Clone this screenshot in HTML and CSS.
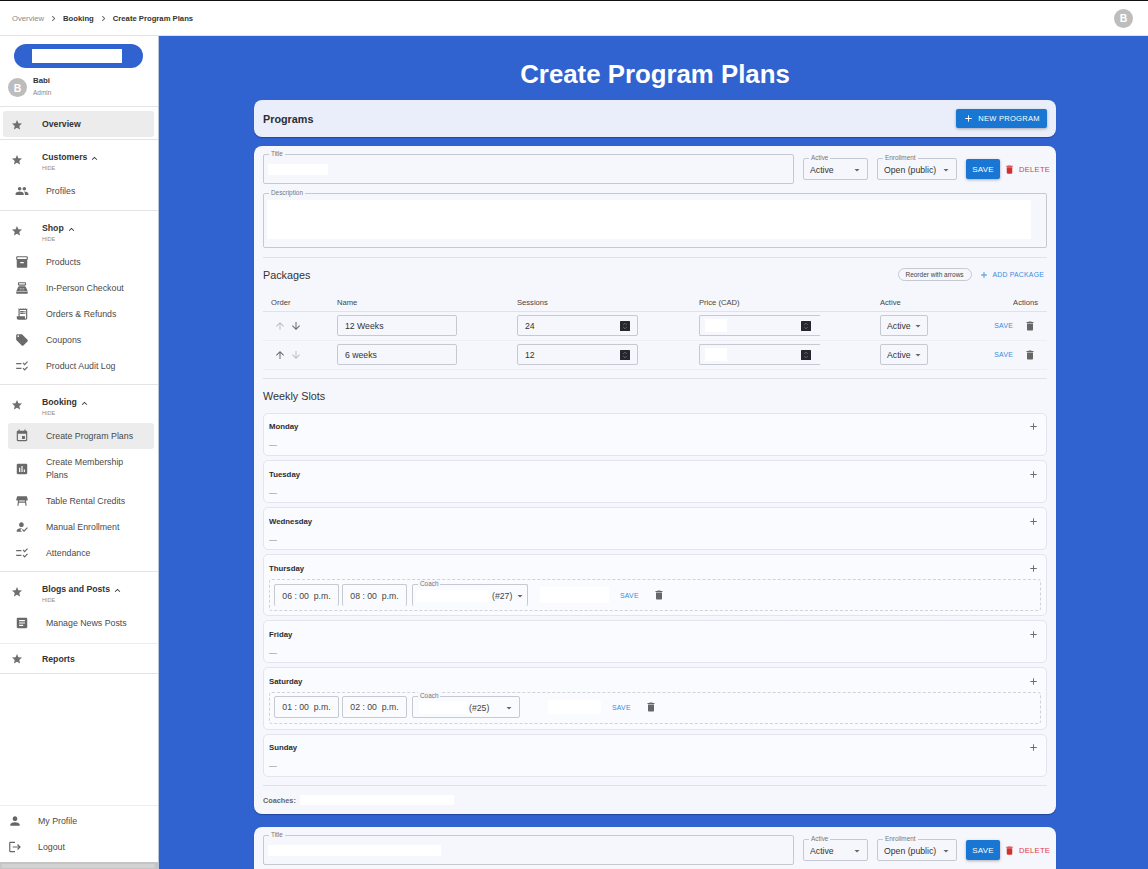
FILE: index.html
```html
<!DOCTYPE html>
<html lang="en">
<head>
<meta charset="utf-8">
<title>Create Program Plans</title>
<link rel="stylesheet" href="styles.css">
</head>
<body>
<svg class="sprite" aria-hidden="true">
<symbol id="i-star" viewBox="0 0 24 24"><path d="M12 17.27 18.18 21l-1.64-7.03L22 9.24l-7.19-.61L12 2 9.19 8.63 2 9.24l5.46 4.73L5.82 21z"/></symbol>
<symbol id="i-people" viewBox="0 0 24 24"><path d="M16 11c1.66 0 2.99-1.34 2.99-3S17.66 5 16 5c-1.66 0-3 1.34-3 3s1.34 3 3 3zm-8 0c1.66 0 2.99-1.34 2.99-3S9.66 5 8 5C6.34 5 5 6.34 5 8s1.34 3 3 3zm0 2c-2.33 0-7 1.17-7 3.5V19h14v-2.5c0-2.33-4.67-3.5-7-3.5zm8 0c-.29 0-.62.02-.97.05 1.16.84 1.97 1.97 1.97 3.45V19h6v-2.5c0-2.33-4.67-3.5-7-3.5z"/></symbol>
<symbol id="i-less" viewBox="0 0 24 24"><path d="M12 8l-6 6 1.41 1.41L12 10.83l4.59 4.58L18 14z"/></symbol>
<symbol id="i-box" viewBox="0 0 24 24"><path d="M20 2H4c-1 0-2 .9-2 2v3.01c0 .72.43 1.34 1 1.69V20c0 1.1 1.1 2 2 2h14c.9 0 2-.9 2-2V8.7c.57-.35 1-.97 1-1.69V4c0-1.1-1-2-2-2zm-5 12H9v-2h6v2zm5-7H4V4l16-.02V7z"/></symbol>
<symbol id="i-pos" viewBox="0 0 24 24"><path d="M17 2H7c-1.1 0-2 .9-2 2v2c0 1.1.9 2 2 2h10c1.1 0 2-.9 2-2V4c0-1.1-.9-2-2-2zm0 4H7V4h10v2zm3 16H4c-1.1 0-2-.9-2-2v-1h20v1c0 1.1-.9 2-2 2zm-1.47-11.81C18.21 9.47 17.49 9 16.7 9H7.3c-.79 0-1.51.47-1.83 1.19L2 18h20l-3.47-7.81zM9.5 16h-1c-.28 0-.5-.22-.5-.5s.22-.5.5-.5h1c.28 0 .5.22.5.5s-.22.5-.5.5zm0-3h-1c-.28 0-.5-.22-.5-.5s.22-.5.5-.5h1c.28 0 .5.22.5.5s-.22.5-.5.5zm3 3h-1c-.28 0-.5-.22-.5-.5s.22-.5.5-.5h1c.28 0 .5.22.5.5s-.22.5-.5.5zm0-3h-1c-.28 0-.5-.22-.5-.5s.22-.5.5-.5h1c.28 0 .5.22.5.5s-.22.5-.5.5zm3 3h-1c-.28 0-.5-.22-.5-.5s.22-.5.5-.5h1c.28 0 .5.22.5.5s-.22.5-.5.5zm0-3h-1c-.28 0-.5-.22-.5-.5s.22-.5.5-.5h1c.28 0 .5.22.5.5s-.22.5-.5.5z"/></symbol>
<symbol id="i-receipt" viewBox="0 0 24 24"><path d="M19.5 3.5 18 2l-1.5 1.5L15 2l-1.5 1.5L12 2l-1.5 1.5L9 2 7.5 3.5 6 2v14H3v3c0 1.66 1.34 3 3 3h12c1.66 0 3-1.34 3-3V2l-1.5 1.5zM19 19c0 .55-.45 1-1 1s-1-.45-1-1v-3H8V5h11v14z"/><path d="M9 7h6v2H9zm7 0h2v2h-2zM9 10h6v2H9zm7 0h2v2h-2z"/></symbol>
<symbol id="i-tag" viewBox="0 0 24 24"><path d="M21.41 11.58l-9-9C12.05 2.22 11.55 2 11 2H4c-1.1 0-2 .9-2 2v7c0 .55.22 1.05.59 1.42l9 9c.36.36.86.58 1.41.58.55 0 1.05-.22 1.41-.59l7-7c.37-.36.59-.86.59-1.41 0-.55-.23-1.06-.59-1.42zM5.5 7C4.67 7 4 6.33 4 5.5S4.67 4 5.5 4 7 4.67 7 5.5 6.33 7 5.5 7z"/></symbol>
<symbol id="i-checks" viewBox="0 0 24 24"><path d="M16.54 11 13 7.46l1.41-1.41 2.12 2.12 4.24-4.24 1.41 1.41L16.54 11zM11 7H2v2h9V7zM16.54 20 13 16.46l1.41-1.41 2.12 2.12 4.24-4.24 1.41 1.41L16.54 20zM11 15H2v2h9v-2z"/></symbol>
<symbol id="i-event" viewBox="0 0 24 24"><path d="M17 12h-5v5h5v-5zM16 1v2H8V1H6v2H5c-1.11 0-1.99.9-1.99 2L3 19c0 1.1.89 2 2 2h14c1.1 0 2-.9 2-2V5c0-1.1-.9-2-2-2h-1V1h-2zm3 18H5V8h14v11z"/></symbol>
<symbol id="i-chart" viewBox="0 0 24 24"><path d="M19 3H5c-1.1 0-2 .9-2 2v14c0 1.1.9 2 2 2h14c1.1 0 2-.9 2-2V5c0-1.1-.9-2-2-2zM9 17H7v-7h2v7zm4 0h-2V7h2v10zm4 0h-2v-4h2v4z"/></symbol>
<symbol id="i-table" viewBox="0 0 24 24"><path d="M21.96 9.73l-1.43-5C20.41 4.3 20.02 4 19.57 4H4.43c-.45 0-.84.3-.96.73l-1.43 5C1.86 10.36 2.34 11 3 11h2.2L4 20h2l.67-5h10.67l.66 5h2l-1.2-9H21c.66 0 1.14-.64.96-1.27zM6.93 13l.27-2h9.6l.27 2H6.93z"/></symbol>
<symbol id="i-enroll" viewBox="0 0 24 24"><path d="M9 17l3-2.94c-.39-.04-.68-.06-1-.06-2.67 0-8 1.34-8 4v2h9l-3-3zm2-5c2.21 0 4-1.79 4-4s-1.79-4-4-4-4 1.79-4 4 1.79 4 4 4m4.47 8.5L12 17l1.4-1.41 2.07 2.08 5.13-5.17 1.4 1.41z"/></symbol>
<symbol id="i-article" viewBox="0 0 24 24"><path d="M19 3H5c-1.1 0-2 .9-2 2v14c0 1.1.9 2 2 2h14c1.1 0 2-.9 2-2V5c0-1.1-.9-2-2-2zm-5 14H7v-2h7v2zm3-4H7v-2h10v2zm0-4H7V7h10v2z"/></symbol>
<symbol id="i-person" viewBox="0 0 24 24"><path d="M12 12c2.21 0 4-1.79 4-4s-1.79-4-4-4-4 1.79-4 4 1.79 4 4 4zm0 2c-2.67 0-8 1.34-8 4v2h16v-2c0-2.66-5.33-4-8-4z"/></symbol>
<symbol id="i-logout" viewBox="0 0 24 24"><path d="M17 7l-1.41 1.41L18.17 11H8v2h10.17l-2.58 2.58L17 17l5-5zM4 5h8V3H4c-1.1 0-2 .9-2 2v14c0 1.1.9 2 2 2h8v-2H4V5z"/></symbol>
<symbol id="i-delete" viewBox="0 0 24 24"><path d="M6 19c0 1.1.9 2 2 2h8c1.1 0 2-.9 2-2V7H6v12zM19 4h-3.5l-1-1h-5l-1 1H5v2h14V4z"/></symbol>
<symbol id="i-add" viewBox="0 0 24 24"><path d="M19 13h-6v6h-2v-6H5v-2h6V5h2v6h6v2z"/></symbol>
<symbol id="i-up" viewBox="0 0 24 24"><path d="M4 12l1.41 1.41L11 7.83V20h2V7.83l5.58 5.59L20 12l-8-8-8 8z"/></symbol>
<symbol id="i-down" viewBox="0 0 24 24"><path d="M20 12l-1.41-1.41L13 16.17V4h-2v12.17l-5.58-5.59L4 12l8 8 8-8z"/></symbol>
<symbol id="i-next" viewBox="0 0 24 24"><path d="M10 6 8.59 7.41 13.17 12l-4.58 4.59L10 18l6-6z"/></symbol>
<symbol id="i-drop" viewBox="0 0 24 24"><path d="M7 10l5 5 5-5z"/></symbol>
<symbol id="i-spin" viewBox="0 0 10 10"><rect width="10" height="10" rx=".5" fill="#26262e"/><path d="M3.2 4 5 2.2 6.8 4M3.2 6 5 7.8 6.8 6" fill="none" stroke="#7d7d85" stroke-width=".7"/></symbol>
</svg>

<header class="topbar">
  <nav class="crumbs">
    <span class="crumb-muted">Overview</span>
    <svg class="crumb-sep"><use href="#i-next"/></svg>
    <span class="crumb-strong">Booking</span>
    <svg class="crumb-sep"><use href="#i-next"/></svg>
    <span class="crumb-strong">Create Program Plans</span>
  </nav>
  <div class="avatar avatar-top">B</div>
</header>

<div class="shell">
  <aside class="sidebar">
    <div class="brand"><div class="brand-pill"><div class="blank brand-blank"></div></div></div>
    <div class="user">
      <div class="avatar">B</div>
      <div class="user-text"><div class="user-name">Babi</div><div class="user-role">Admin</div></div>
    </div>

    <section class="nav-top">
      <a class="nav-single is-active"><svg class="star"><use href="#i-star"/></svg><span class="group-title">Overview</span></a>
    </section>

    <section class="nav-group nav-group-customers">
      <div class="group-head"><svg class="star"><use href="#i-star"/></svg><div><div class="group-title">Customers<svg class="less"><use href="#i-less"/></svg></div><div class="hide">HIDE</div></div></div>
      <a class="sub"><svg class="sub-icon"><use href="#i-people"/></svg><span>Profiles</span></a>
    </section>

    <section class="nav-group">
      <div class="group-head"><svg class="star"><use href="#i-star"/></svg><div><div class="group-title">Shop<svg class="less"><use href="#i-less"/></svg></div><div class="hide">HIDE</div></div></div>
      <a class="sub"><svg class="sub-icon"><use href="#i-box"/></svg><span>Products</span></a>
      <a class="sub"><svg class="sub-icon"><use href="#i-pos"/></svg><span>In-Person Checkout</span></a>
      <a class="sub"><svg class="sub-icon"><use href="#i-receipt"/></svg><span>Orders &amp; Refunds</span></a>
      <a class="sub"><svg class="sub-icon"><use href="#i-tag"/></svg><span>Coupons</span></a>
      <a class="sub"><svg class="sub-icon"><use href="#i-checks"/></svg><span>Product Audit Log</span></a>
    </section>

    <section class="nav-group">
      <div class="group-head"><svg class="star"><use href="#i-star"/></svg><div><div class="group-title">Booking<svg class="less"><use href="#i-less"/></svg></div><div class="hide">HIDE</div></div></div>
      <a class="sub is-active"><svg class="sub-icon"><use href="#i-event"/></svg><span>Create Program Plans</span></a>
      <a class="sub sub-tall"><svg class="sub-icon"><use href="#i-chart"/></svg><span>Create Membership<br>Plans</span></a>
      <a class="sub"><svg class="sub-icon"><use href="#i-table"/></svg><span>Table Rental Credits</span></a>
      <a class="sub"><svg class="sub-icon"><use href="#i-enroll"/></svg><span>Manual Enrollment</span></a>
      <a class="sub"><svg class="sub-icon"><use href="#i-checks"/></svg><span>Attendance</span></a>
    </section>

    <section class="nav-group nav-group-blogs">
      <div class="group-head"><svg class="star"><use href="#i-star"/></svg><div><div class="group-title">Blogs and Posts<svg class="less"><use href="#i-less"/></svg></div><div class="hide">HIDE</div></div></div>
      <a class="sub"><svg class="sub-icon"><use href="#i-article"/></svg><span>Manage News Posts</span></a>
    </section>

    <section class="nav-reports">
      <svg class="star"><use href="#i-star"/></svg><span class="group-title">Reports</span>
    </section>

    <div class="spacer"></div>

    <section class="nav-bottom">
      <a class="bottom-item"><svg class="bottom-icon"><use href="#i-person"/></svg><span>My Profile</span></a>
      <a class="bottom-item"><svg class="bottom-icon"><use href="#i-logout"/></svg><span>Logout</span></a>
    </section>
    <div class="side-scroll"><div class="side-thumb"></div></div>
  </aside>

  <main class="main">
    <div class="column">
      <h1 class="page-title">Create Program Plans</h1>

      <div class="programs-bar">
        <h2 class="programs-title">Programs</h2>
        <button class="btn btn-new"><svg class="btn-icon"><use href="#i-add"/></svg>NEW PROGRAM</button>
      </div>

      <article class="card">
        <div class="head-row">
          <div class="field field-title"><span class="field-label">Title</span><div class="blank title-blank"></div></div>
          <div class="field field-select field-active"><span class="field-label">Active</span><span class="select-value">Active</span><svg class="drop"><use href="#i-drop"/></svg></div>
          <div class="field field-select field-enroll"><span class="field-label">Enrollment</span><span class="select-value">Open (public)</span><svg class="drop"><use href="#i-drop"/></svg></div>
          <button class="btn btn-save">SAVE</button>
          <button class="btn-delete"><svg class="delete-icon"><use href="#i-delete"/></svg>DELETE</button>
        </div>
        <div class="field field-desc"><span class="field-label">Description</span><div class="blank desc-blank"></div></div>
        <hr class="rule">

        <div class="packages-head">
          <h3 class="section-title">Packages</h3>
          <div class="packages-tools">
            <span class="chip">Reorder with arrows</span>
            <button class="btn-text btn-add"><svg class="add-icon"><use href="#i-add"/></svg>ADD PACKAGE</button>
          </div>
        </div>

        <div class="pkg-row pkg-header">
          <span class="order-head">Order</span><span>Name</span><span>Sessions</span><span>Price (CAD)</span><span>Active</span><span class="actions-head">Actions</span>
        </div>
        <div class="pkg-row">
          <div class="order"><svg class="arrow arrow-off"><use href="#i-up"/></svg><svg class="arrow"><use href="#i-down"/></svg></div>
          <div class="input input-name">12 Weeks</div>
          <div class="input input-num">24<svg class="spin"><use href="#i-spin"/></svg></div>
          <div class="input input-num input-price"><span class="blank price-blank"></span><svg class="spin"><use href="#i-spin"/></svg></div>
          <div class="input input-sel">Active<svg class="drop"><use href="#i-drop"/></svg></div>
          <div class="pkg-actions"><button class="btn-text">SAVE</button><svg class="trash"><use href="#i-delete"/></svg></div>
        </div>
        <div class="pkg-row">
          <div class="order"><svg class="arrow"><use href="#i-up"/></svg><svg class="arrow arrow-off"><use href="#i-down"/></svg></div>
          <div class="input input-name">6 weeks</div>
          <div class="input input-num">12<svg class="spin"><use href="#i-spin"/></svg></div>
          <div class="input input-num input-price"><span class="blank price-blank"></span><svg class="spin"><use href="#i-spin"/></svg></div>
          <div class="input input-sel">Active<svg class="drop"><use href="#i-drop"/></svg></div>
          <div class="pkg-actions"><button class="btn-text">SAVE</button><svg class="trash"><use href="#i-delete"/></svg></div>
        </div>
        <hr class="rule rule-table">

        <h3 class="section-title slots-title">Weekly Slots</h3>

        <div class="days">
          <div class="day"><div class="day-head"><span class="day-name">Monday</span><svg class="day-add"><use href="#i-add"/></svg></div><div class="day-empty">—</div></div>
          <div class="day day-low"><div class="day-head"><span class="day-name">Tuesday</span><svg class="day-add"><use href="#i-add"/></svg></div><div class="day-empty">—</div></div>
          <div class="day day-low"><div class="day-head"><span class="day-name">Wednesday</span><svg class="day-add"><use href="#i-add"/></svg></div><div class="day-empty">—</div></div>
          <div class="day day-full">
            <div class="day-head"><span class="day-name">Thursday</span><svg class="day-add"><use href="#i-add"/></svg></div>
            <div class="slot slot-thu">
              <div class="time time-open">06 : 00&nbsp; p.m.</div>
              <div class="time time-open">08 : 00&nbsp; p.m.</div>
              <div class="field coach coach-thu coach-open"><span class="field-label">Coach</span><span class="blank coach-blank-thu"></span><span class="coach-id">(#27)</span><svg class="drop"><use href="#i-drop"/></svg></div>
              <span class="blank slot-blank-thu"></span>
              <button class="btn-text slot-save">SAVE</button>
              <svg class="trash slot-trash"><use href="#i-delete"/></svg>
            </div>
          </div>
          <div class="day day-low"><div class="day-head"><span class="day-name">Friday</span><svg class="day-add"><use href="#i-add"/></svg></div><div class="day-empty">—</div></div>
          <div class="day day-full day-sat">
            <div class="day-head"><span class="day-name">Saturday</span><svg class="day-add"><use href="#i-add"/></svg></div>
            <div class="slot slot-sat">
              <div class="time">01 : 00&nbsp; p.m.</div>
              <div class="time">02 : 00&nbsp; p.m.</div>
              <div class="field coach coach-sat"><span class="field-label">Coach</span><span class="blank coach-blank-sat"></span><span class="coach-id">(#25)</span><svg class="drop"><use href="#i-drop"/></svg></div>
              <span class="blank slot-blank-sat"></span>
              <button class="btn-text slot-save">SAVE</button>
              <svg class="trash slot-trash"><use href="#i-delete"/></svg>
            </div>
          </div>
          <div class="day"><div class="day-head"><span class="day-name">Sunday</span><svg class="day-add"><use href="#i-add"/></svg></div><div class="day-empty">—</div></div>
        </div>
        <hr class="rule rule-coaches">
        <div class="coaches"><span>Coaches:</span><span class="blank coaches-blank"></span></div>
      </article>

      <article class="card card-next">
        <div class="head-row">
          <div class="field field-title"><span class="field-label">Title</span><div class="blank title-blank-2"></div></div>
          <div class="field field-select field-active"><span class="field-label">Active</span><span class="select-value">Active</span><svg class="drop"><use href="#i-drop"/></svg></div>
          <div class="field field-select field-enroll"><span class="field-label">Enrollment</span><span class="select-value">Open (public)</span><svg class="drop"><use href="#i-drop"/></svg></div>
          <button class="btn btn-save">SAVE</button>
          <button class="btn-delete"><svg class="delete-icon"><use href="#i-delete"/></svg>DELETE</button>
        </div>
      </article>
    </div>
  </main>
</div>
</body>
</html>
```

FILE: styles.css
```css
* { box-sizing: border-box; }
html, body { margin: 0; height: 100%; overflow: hidden; }
body {
  font-family: "Liberation Sans", Arial, sans-serif;
  font-size: 9px;
  color: #2b2d33;
  background: #fff;
}
.sprite { display: none; }
svg { fill: currentColor; display: block; flex: none; }
h1, h2, h3 { margin: 0; }
button { font-family: inherit; border: 0; background: none; padding: 0; }
.blank { display: block; background: #fff; }

/* top bar */
.topbar {
  height: 36px;
  border-top: 1px solid #111;
  border-bottom: 1px solid #e4e4e4;
  display: flex;
  align-items: center;
  justify-content: space-between;
  padding: 0 15px 0 12px;
}
.crumbs { display: flex; align-items: center; font-size: 7.7px; }
.crumb-muted { color: #8a8a8a; }
.crumb-strong { font-weight: 700; color: #333; }
.crumb-sep { width: 11px; height: 11px; margin: 0 4px; color: #666; }
.avatar {
  width: 19px; height: 19px; border-radius: 50%;
  background: #bdbdbd; color: #fff;
  display: flex; align-items: center; justify-content: center;
  font-size: 10.5px; font-weight: 700;
}

.shell { display: flex; height: 833px; }

/* sidebar */
.sidebar {
  width: 159px; flex: none;
  border-right: 1px solid #b9c6df;
  display: flex; flex-direction: column;
  background: #fff;
}
.brand { padding: 8px 15px 0 14px; }
.brand-pill {
  height: 24px; border-radius: 12px; background: #3063d0;
  display: flex; align-items: center; padding-left: 18px;
}
.brand-blank { width: 90px; height: 14px; }
.user { display: flex; align-items: center; gap: 6px; padding: 6px 8px 5px; height: 38px; }
.user-text { margin-top: -2px; }
.user-name { font-size: 7.8px; font-weight: 700; color: #333; line-height: 11px; }
.user-role { font-size: 6.5px; color: #888; line-height: 11px; margin-top: 1px; }

.nav-top { border-top: 1px solid #e4e4e4; padding: 4px 4px 2px 3px; }
.nav-single { display: flex; align-items: center; height: 26px; padding: 1px 0 0 8px; gap: 19px; border-radius: 3px; }
.is-active { background: #ececec; }
.star { width: 12px; height: 12px; color: #6f6f6f; }
.group-title { font-size: 8.7px; font-weight: 700; color: #333; display: flex; align-items: center; line-height: 11px; }
.less { width: 11px; height: 11px; margin: 2px 0 0 2px; color: #333; }
.hide { font-size: 5.5px; color: #8c8c8c; line-height: 8px; }

.nav-group { border-top: 1px solid #e4e4e4; padding-bottom: 5px; }
.nav-group-customers { padding-bottom: 6px; }
.nav-group-blogs { padding-bottom: 7px; }
.group-head { height: 38px; display: flex; align-items: center; gap: 19px; padding: 5px 0 0 11px; }
.group-head .star { margin-top: -4px; }
.sub {
  display: flex; align-items: center; height: 26px;
  margin: 0 4px 0 8px; padding-left: 7px; gap: 17px;
  font-size: 8.8px; color: #4a4a4a; line-height: 13px;
  border-radius: 3px;
}
.sub-tall { height: 39px; }
.sub-icon { width: 14px; height: 14px; color: #6a6a6a; }

.nav-reports {
  border-top: 1px solid #eee; border-bottom: 1px solid #e4e4e4;
  height: 31px; display: flex; align-items: center; gap: 19px; padding: 1px 0 0 11px;
}
.spacer { flex: 1; }
.nav-bottom { border-top: 1px solid #eee; padding: 2px 0; }
.bottom-item { display: flex; align-items: center; height: 26px; gap: 16px; padding-left: 8px; font-size: 8.8px; color: #4a4a4a; }
.bottom-icon { width: 14px; height: 14px; color: #666; }
.side-scroll { height: 7px; background: #c4c4c4; padding: 2px 3px 1px 1px; }
.side-thumb { height: 100%; background: #d2d2d2; border-radius: 2px; }

/* main */
.main { flex: 1; background: #3063d0; overflow: hidden; padding-left: 95px; }
.column { width: 802px; }
.page-title { height: 64px; line-height: 76px; text-align: center; color: #fff; font-size: 25.8px; font-weight: 700; }

.programs-bar {
  height: 37px; background: #e9eefa; border-radius: 8px;
  display: flex; align-items: center; justify-content: space-between;
  padding: 0 9px;
  box-shadow: 0 1px 1px rgba(20,40,110,.5);
}
.programs-title { font-size: 10.8px; font-weight: 700; color: #2b2d33; }
.btn {
  background: #1976d2; color: #fff; border-radius: 2px;
  display: flex; align-items: center; justify-content: center;
  box-shadow: 0 1px 3px rgba(0,0,0,.3);
}
.btn-new { width: 91px; height: 19px; gap: 4px; font-size: 7.5px; letter-spacing: .3px; font-weight: 400; }
.btn-icon { width: 11px; height: 11px; }

.card {
  background: #f5f7fc; border-radius: 8px;
  margin-top: 9px; padding: 8px 9px 0;
  height: 668px;
  box-shadow: 0 1px 1px rgba(20,40,110,.5);
}
.card-next { margin-top: 13px; height: 60px; }

.head-row { display: flex; align-items: center; gap: 9px; height: 30px; }
.field { position: relative; border: 1px solid #c6c9d2; border-radius: 2px; }
.field-label {
  position: absolute; top: -5px; left: 5px;
  font-size: 6.4px; line-height: 7px; color: #777;
  padding: 0 2px; background: #f5f7fc;
}
.field-title { flex: 1; min-width: 0; height: 30px; padding: 9px 4px 0; }
.title-blank { width: 60px; height: 11px; }
.title-blank-2 { width: 173px; height: 11px; }
.field-select { height: 22px; display: flex; align-items: center; padding: 2px 4px 0 6px; font-size: 8.7px; color: #333; }
.select-value { flex: 1; white-space: nowrap; }
.field-active { width: 65px; flex: none; }
.field-enroll { width: 80px; flex: none; }
.drop { width: 12px; height: 12px; color: #666; }
.btn-save { width: 34px; height: 20px; flex: none; font-size: 8px; letter-spacing: .2px; }
.btn-delete {
  display: flex; align-items: center; gap: 4px;
  width: 46px; flex: none;
  margin: 0 -3px 0 -5px;
  color: #e53945; font-size: 7.7px; letter-spacing: .2px;
  white-space: nowrap;
}
.delete-icon { width: 11px; height: 11px; color: #d32f2f; }

.field-desc { height: 55px; margin-top: 9px; padding: 6px 15px 0 3px; }
.desc-blank { height: 39px; }

.rule { border: 0; border-top: 1px solid #dfe2ea; margin: 9px 0 0; }
.rule-table { margin-top: 8px; }
.packages-head { display: flex; align-items: center; justify-content: space-between; height: 35px; padding: 0 3px 1px 0; }
.section-title { font-size: 10.8px; font-weight: 400; color: #333; }
.packages-tools { display: flex; align-items: center; gap: 7px; margin-top: -1px; }
.chip {
  height: 13px; width: 74px; border: 1px solid #c6c9d2; border-radius: 7px;
  display: flex; align-items: center; justify-content: center;
  font-size: 6.5px; color: #444; white-space: nowrap;
}
.btn-text { color: #3d8ae0; font-size: 6.9px; letter-spacing: .2px; white-space: nowrap; }
.btn-add { display: flex; align-items: center; gap: 4px; }
.add-icon { width: 10px; height: 10px; }

.pkg-row {
  display: grid;
  grid-template-columns: 74px 180px 182px 181px 1fr 80px;
  align-items: center;
  height: 29px;
  padding-bottom: 1px;
  border-bottom: 1px solid #eceef4;
}
.pkg-header { height: 19px; padding-bottom: 0; border-bottom: 1px solid #dfe2ea; font-size: 7.6px; color: #444; }
.order-head { padding-left: 8px; }
.actions-head { text-align: right; padding-right: 9px; }
.order { display: flex; gap: 4px; padding-left: 11px; }
.arrow { width: 12px; height: 12px; color: #6a6a6a; }
.arrow-off { color: #bcc0c8; }
.input {
  height: 21px; border: 1px solid #c6c9d2; border-radius: 2px;
  display: flex; align-items: center;
  font-size: 8.7px; color: #333; padding: 0 7px;
}
.input-name { width: 120px; }
.input-num { width: 121px; justify-content: space-between; padding-right: 7px; }
.input-price { border-right: 0; border-radius: 2px 0 0 2px; padding-left: 5px; padding-right: 9px; }
.price-blank { width: 22px; height: 13px; }
.spin { width: 10px; height: 10px; }
.input-sel { width: 48px; padding: 0 3px 0 6px; justify-content: space-between; }
.pkg-actions { display: flex; align-items: center; justify-content: flex-end; gap: 11px; padding-right: 11px; margin-left: -30px; }
.trash { width: 12px; height: 12px; color: #666; }

.slots-title { margin-top: 11px; line-height: 12px; }
.days { margin-top: 11px; display: flex; flex-direction: column; gap: 4px; }
.day {
  height: 43px; background: #fafbfe;
  border: 1px solid #e2e5ed; border-radius: 5px;
  padding: 0 5px;
}
.day-full { height: auto; padding-bottom: 4px; }
.day-sat { padding-bottom: 5px; }
.day-full .day-head, .day-low .day-head { padding-top: 2px; }
.day-head { display: flex; align-items: center; justify-content: space-between; height: 24px; padding-right: 2px; }
.day-name { font-size: 7.8px; font-weight: 700; color: #2b2d33; }
.day-add { width: 11px; height: 11px; color: #6a6a6a; }
.day-empty { font-size: 8px; color: #888; line-height: 12px; margin-top: 1px; }
.day-low .day-empty { margin-top: 2px; }
.slot {
  border: 1px dashed #cfd2da; border-radius: 3px;
  display: flex; align-items: center;
  padding: 4px 4px; height: 32px;
  gap: 3px;
}
.slot-sat { padding-bottom: 6px; }
.time {
  width: 65px; height: 22px; border: 1px solid #c6c9d2; border-radius: 2px;
  display: flex; align-items: center; justify-content: center;
  font-size: 8.7px; color: #444; white-space: nowrap;
}
.time-open { border-bottom: 0; }
.coach { height: 22px; display: flex; align-items: center; font-size: 8.7px; color: #444; padding-top: 1px; margin-left: 2px; }
.coach-open { border-bottom: 0; }
.coach-thu { width: 116px; padding-left: 3px; }
.coach-sat { width: 108px; padding-left: 6px; }
.coach-blank-thu { width: 72px; height: 12px; margin-right: 3px; }
.coach-blank-sat { width: 48px; height: 13px; margin-right: 1px; }
.coach-id { margin-left: 1px; }
.coach .drop { margin-left: 2px; }
.coach-sat .drop { margin-left: 14px; }
.slot-blank-thu { width: 69px; height: 16px; margin-left: 9px; }
.slot-blank-sat { width: 53px; height: 14px; margin-left: 25px; }
.slot-save { margin-left: 8px; }
.slot-trash { margin-left: 11px; }

.rule-coaches { margin-top: 8px; }
.coaches { display: flex; align-items: center; gap: 4px; margin-top: 9px; font-size: 7.3px; font-weight: 700; color: #666; }
.coaches-blank { width: 154px; height: 10px; }
```
